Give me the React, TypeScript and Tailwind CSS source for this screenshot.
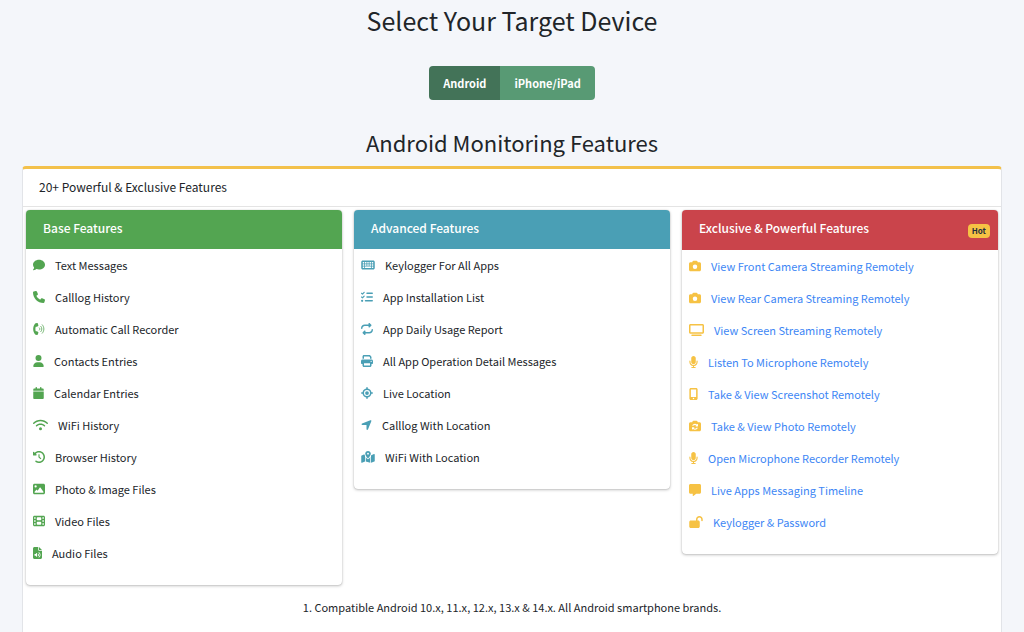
import { useState } from "react";
import {
  FaCalendar,
  FaCamera,
  FaCameraRotate,
  FaClockRotateLeft,
  FaComment,
  FaFileAudio,
  FaFilm,
  FaImage,
  FaKeyboard,
  FaListCheck,
  FaLocationArrow,
  FaLocationCrosshairs,
  FaLockOpen,
  FaMapLocationDot,
  FaMessage,
  FaMicrophone,
  FaMobileScreenButton,
  FaPhone,
  FaPrint,
  FaRepeat,
  FaTv,
  FaUser,
  FaWifi,
} from "react-icons/fa6";

type Feature = { icon: any; name: string; width: string };

// the original drawing has empty side margins, crop them away
function PhotoRotateIcon(props: any) {
  return <FaCameraRotate {...props} viewBox="64 0 512 512" />;
}

function CallRecorderIcon(props: any) {
  return (
    <svg viewBox="0 0 512 512" fill="none" {...props}>
      <path
        fill="currentColor"
        d="M112 12 173 2c14-2 27 6 32 19l24 70c4 12 1 25-9 33l-50 36c-4 3-48-10-52 0-22 60-22 132 0 192 4 10 48-3 52 0l50 36c10 8 13 21 9 33l-24 70c-5 13-18 21-32 19l-61-10c-11-2-21-8-28-17C-18 350-18 162 84 29c7-9 17-15 28-17Z"
      />
      <g stroke="currentColor" strokeWidth="34" strokeLinecap="round">
        <path d="M276 210c23 25 23 67 0 92" />
        <path d="M336 143c58 62 58 164 0 226" />
        <path d="M396 76c94 98 94 262 0 360" />
      </g>
    </svg>
  );
}

const baseFeatures: Feature[] = [
  { icon: FaComment, name: "Text Messages", width: "w-3" },
  { icon: FaPhone, name: "Calllog History", width: "w-3" },
  { icon: CallRecorderIcon, name: "Automatic Call Recorder", width: "w-3" },
  { icon: FaUser, name: "Contacts Entries", width: "w-[11px]" },
  { icon: FaCalendar, name: "Calendar Entries", width: "w-[11px]" },
  { icon: FaWifi, name: "WiFi History", width: "w-[15px]" },
  { icon: FaClockRotateLeft, name: "Browser History", width: "w-3" },
  { icon: FaImage, name: "Photo & Image Files", width: "w-3" },
  { icon: FaFilm, name: "Video Files", width: "w-3" },
  { icon: FaFileAudio, name: "Audio Files", width: "w-[9px]" },
];

const advancedFeatures: Feature[] = [
  { icon: FaKeyboard, name: "Keylogger For All Apps", width: "w-[14px]" },
  { icon: FaListCheck, name: "App Installation List", width: "w-3" },
  { icon: FaRepeat, name: "App Daily Usage Report", width: "w-3" },
  { icon: FaPrint, name: "All App Operation Detail Messages", width: "w-3" },
  { icon: FaLocationCrosshairs, name: "Live Location", width: "w-3" },
  { icon: FaLocationArrow, name: "Calllog With Location", width: "w-[11px]" },
  { icon: FaMapLocationDot, name: "WiFi With Location", width: "w-[14px]" },
];

const exclusiveFeatures: Feature[] = [
  { icon: FaCamera, name: "View Front Camera Streaming Remotely", width: "w-3" },
  { icon: FaCamera, name: "View Rear Camera Streaming Remotely", width: "w-3" },
  { icon: FaTv, name: "View Screen Streaming Remotely", width: "w-[15px]" },
  { icon: FaMicrophone, name: "Listen To Microphone Remotely", width: "w-[9px]" },
  {
    icon: FaMobileScreenButton,
    name: "Take & View Screenshot Remotely",
    width: "w-[9px]",
  },
  { icon: PhotoRotateIcon, name: "Take & View Photo Remotely", width: "w-3" },
  {
    icon: FaMicrophone,
    name: "Open Microphone Recorder Remotely",
    width: "w-[9px]",
  },
  { icon: FaMessage, name: "Live Apps Messaging Timeline", width: "w-3" },
  { icon: FaLockOpen, name: "Keylogger & Password", width: "w-[14px]" },
];

function FeatureCard({ title, headerClass, iconClass, items, links, badge }: any) {
  return (
    <div className="rounded bg-white shadow-[0_0_1px_rgba(0,0,0,0.25),0_1px_3px_rgba(0,0,0,0.25)]">
      <div
        className={`flex items-start justify-between rounded-t pt-2 pr-2 pl-[17px] text-white ${headerClass}`}
      >
        <h3 className="text-[12px] leading-5 font-medium">{title}</h3>
        {badge && (
          <span className="mt-1.5 rounded bg-[#f6c244] px-1 text-[8px] leading-[14px] font-bold text-[#1f2d3d]">
            {badge}
          </span>
        )}
      </div>
      <ul className="pb-4 pl-[7px]">
        {items.map((item: Feature) => (
          <li key={item.name} className="flex h-8 items-center gap-2.5">
            <item.icon className={`h-3 shrink-0 ${item.width} ${iconClass}`} />
            {links ? (
              <a href="#" className="text-[#3d86f5] hover:underline">
                {item.name}
              </a>
            ) : (
              <span>{item.name}</span>
            )}
          </li>
        ))}
      </ul>
    </div>
  );
}

function App() {
  const [device, setDevice] = useState("Android");

  return (
    <div className="flex min-h-screen flex-col bg-[#f4f6fa] px-[22px] font-['Noto_Sans_CJK_SC',sans-serif] text-[11px] leading-4 text-[#212529]">
      <h1 className="mt-0.5 text-center text-[25px] leading-9">
        Select Your Target Device
      </h1>

      <div className="mt-7 flex justify-center text-[11px] font-bold text-white">
        {["Android", "iPhone/iPad"].map((name) => (
          <button
            key={name}
            type="button"
            onClick={() => setDevice(name)}
            className={`h-[34px] px-3.5 first:rounded-l last:rounded-r ${
              device === name ? "bg-[#437358]" : "bg-[#589a74]"
            }`}
          >
            {name}
          </button>
        ))}
      </div>

      <h2 className="mt-[26px] text-center text-[22px] leading-8">
        Android Monitoring Features
      </h2>

      <div className="mt-2 grow rounded-t border-x border-t-3 border-x-[#e2e4e8] border-t-[#f3c14b] bg-white">
        <div className="border-b border-[#e4e4e4] px-4 pt-2 pb-[9px] text-[12px] leading-5">
          20+ Powerful &amp; Exclusive Features
        </div>
        <div className="grid grid-cols-3 items-start gap-3 px-[3px] pt-[3px]">
          <FeatureCard
            title="Base Features"
            headerClass="h-[39px] bg-[#53a551]"
            iconClass="text-[#53a551]"
            items={baseFeatures}
          />
          <FeatureCard
            title="Advanced Features"
            headerClass="h-[39px] bg-[#4a9fb5]"
            iconClass="text-[#4a9fb5]"
            items={advancedFeatures}
          />
          <FeatureCard
            title="Exclusive & Powerful Features"
            headerClass="h-10 bg-[#ca444b]"
            iconClass="text-[#f6c244]"
            items={exclusiveFeatures}
            links
            badge="Hot"
          />
        </div>
        <p className="py-[14px] text-center">
          1. Compatible Android 10.x, 11.x, 12.x, 13.x &amp; 14.x. All Android
          smartphone brands.
        </p>
      </div>
    </div>
  );
}

export default App;
